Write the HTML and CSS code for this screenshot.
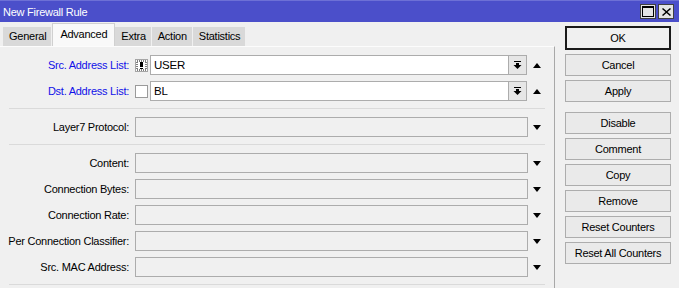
FILE: index.html
```html
<!DOCTYPE html>
<html lang="en">
<head>
    <meta charset="UTF-8">
    <title>New Firewall Rule</title>
    <link rel="stylesheet" href="styles.css">
</head>
<body>
    <div class="titlebar">
        <span class="title">New Firewall Rule</span>
        <div class="title-btns">
            <div class="tbtn">
                <svg width="12" height="11" viewBox="0 0 12 11"><rect x="0.5" y="0.5" width="11" height="10" fill="none" stroke="#000"/><rect x="0" y="0" width="12" height="2" fill="#000"/></svg>
            </div>
            <div class="tbtn">
                <svg width="9" height="8" viewBox="0 0 9 8"><path d="M1 0 L4.5 3 L8 0 L9 1 L5.5 4 L9 7 L8 8 L4.5 5 L1 8 L0 7 L3.5 4 L0 1 Z" fill="#000"/></svg>
            </div>
        </div>
    </div>

    <div class="main">
        <div class="left">
            <div class="tabs">
                <div class="tab">General</div>
                <div class="tab active">Advanced</div>
                <div class="tab">Extra</div>
                <div class="tab">Action</div>
                <div class="tab">Statistics</div>
            </div>

            <div class="panel">
                <!-- address lists -->
                <div class="group">
                    <div class="row">
                        <label class="label blue">Src. Address List:</label>
                        <div class="field">
                            <span class="check">
                                <svg width="13" height="13" viewBox="0 0 13 13"><rect x="0.5" y="0.5" width="12" height="12" fill="#fff" stroke="#555" stroke-dasharray="1 1"/><rect x="2" y="2" width="9" height="9" fill="none" stroke="#000" stroke-dasharray="1 1"/><rect x="5" y="3" width="3" height="5" fill="#000"/><rect x="5" y="9" width="3" height="1" fill="#000"/></svg>
                            </span>
                            <div class="input edit">USER</div>
                            <div class="dropbtn">
                                <svg width="9" height="9" viewBox="0 0 9 9"><rect x="1" y="0" width="7" height="1" fill="#000"/><rect x="3" y="2" width="3" height="2" fill="#000"/><polygon points="0.5,4 8.5,4 4.5,8" fill="#000"/></svg>
                            </div>
                        </div>
                        <span class="arrow up"></span>
                    </div>
                    <div class="row">
                        <label class="label blue">Dst. Address List:</label>
                        <div class="field">
                            <span class="check plain"></span>
                            <div class="input edit">BL</div>
                            <div class="dropbtn">
                                <svg width="9" height="9" viewBox="0 0 9 9"><rect x="1" y="0" width="7" height="1" fill="#000"/><rect x="3" y="2" width="3" height="2" fill="#000"/><polygon points="0.5,4 8.5,4 4.5,8" fill="#000"/></svg>
                            </div>
                        </div>
                        <span class="arrow up"></span>
                    </div>
                </div>

                <div class="group">
                    <div class="row">
                        <label class="label">Layer7 Protocol:</label>
                        <div class="field"><div class="input"></div></div>
                        <span class="arrow down"></span>
                    </div>
                </div>

                <div class="group">
                    <div class="row">
                        <label class="label">Content:</label>
                        <div class="field"><div class="input"></div></div>
                        <span class="arrow down"></span>
                    </div>
                    <div class="row">
                        <label class="label">Connection Bytes:</label>
                        <div class="field"><div class="input"></div></div>
                        <span class="arrow down"></span>
                    </div>
                    <div class="row">
                        <label class="label">Connection Rate:</label>
                        <div class="field"><div class="input"></div></div>
                        <span class="arrow down"></span>
                    </div>
                    <div class="row">
                        <label class="label">Per Connection Classifier:</label>
                        <div class="field"><div class="input"></div></div>
                        <span class="arrow down"></span>
                    </div>
                    <div class="row">
                        <label class="label">Src. MAC Address:</label>
                        <div class="field"><div class="input"></div></div>
                        <span class="arrow down"></span>
                    </div>
                </div>
            </div>
        </div>

        <div class="buttons">
            <button class="btn default">OK</button>
            <button class="btn">Cancel</button>
            <button class="btn">Apply</button>
            <button class="btn spaced">Disable</button>
            <button class="btn">Comment</button>
            <button class="btn">Copy</button>
            <button class="btn">Remove</button>
            <button class="btn">Reset Counters</button>
            <button class="btn">Reset All Counters</button>
        </div>
    </div>
</body>
</html>
```

FILE: styles.css
```css
/* General */
body {
    margin: 0;
    background: #f0f0f0;
    font-family: "Liberation Sans", Arial, sans-serif;
    font-size: 11px;
    letter-spacing: -0.25px;
    color: #000;
    height: 288px;
    overflow: hidden;
}

/* Title bar */
.titlebar {
    height: 22px;
    background: #4b4fca;
    border-top: 1px solid #6d70d6;
    box-sizing: border-box;
    display: flex;
    align-items: center;
    justify-content: space-between;
    padding: 0 5px 0 3px;
}

.title {
    color: #fff;
}

.title-btns {
    display: flex;
    gap: 2px;
}

.tbtn {
    width: 16px;
    height: 15px;
    box-sizing: border-box;
    background: #e4e4e4;
    border: 1px solid #404040;
    display: flex;
    align-items: center;
    justify-content: center;
}

/* Main layout */
.main {
    display: flex;
}

.left {
    width: 555px;
}

/* Tabs */
.tabs {
    height: 23px;
    margin-top: 1px;
    padding-left: 3px;
    display: flex;
    align-items: flex-end;
}

.tab {
    height: 19px;
    line-height: 19px;
    padding: 0 5px 0 6px;
    background: #d9d9d9;
    border-right: 1px solid #f0f0f0;
}

.tab.active {
    height: 23px;
    line-height: 21px;
    padding: 0 7px;
    background: #f9f9f9;
    border: 1px solid #d0d0d0;
    border-bottom: none;
    box-sizing: border-box;
}

/* Panel */
.panel {
    border-top: 1px solid #fcfcfc;
    border-right: 1px solid #a8a8a8;
    height: 241px;
}

.group {
    display: flex;
    flex-direction: column;
    gap: 6px;
    margin: 0 9px;
    padding: 8px 0 7px;
    border-bottom: 1px solid #dadada;
}

.row {
    height: 20px;
    display: flex;
    align-items: center;
}

.label {
    width: 120px;
    margin-right: 6px;
    display: flex;
    justify-content: flex-end;
    white-space: nowrap;
}

.label.blue {
    color: #1010e8;
}

.field {
    flex: 1;
    height: 20px;
    display: flex;
    align-items: center;
}

.input {
    flex: 1;
    height: 20px;
    box-sizing: border-box;
    border: 1px solid #acacac;
    background: #f0f0f0;
    line-height: 18px;
    padding-left: 3px;
}

.input.edit {
    background: #fff;
    font-size: 11.5px;
}

.check {
    width: 13px;
    height: 13px;
    margin-right: 2px;
    display: flex;
}

.check.plain {
    box-sizing: border-box;
    border: 1px solid #9a9a9a;
    background: #fff;
}

.dropbtn {
    width: 18px;
    height: 20px;
    box-sizing: border-box;
    border: 1px solid #acacac;
    border-left: none;
    background: #e6e6e6;
    display: flex;
    align-items: center;
    justify-content: center;
    margin-right: 1px;
}

/* Small triangles */
.arrow {
    width: 17px;
    display: flex;
    justify-content: center;
}

.arrow::before {
    content: "";
    border-left: 4.5px solid transparent;
    border-right: 4.5px solid transparent;
}

.arrow.up::before {
    border-bottom: 5px solid #000;
}

.arrow.down::before {
    border-top: 5px solid #000;
}

/* Button column */
.buttons {
    margin-left: 10px;
    margin-top: 4px;
    width: 106px;
    display: flex;
    flex-direction: column;
    gap: 4px;
}

.btn {
    height: 22px;
    background: #eaeaea;
    border: 1px solid #adadad;
    font-family: inherit;
    font-size: 11px;
    letter-spacing: -0.25px;
    color: #000;
    padding: 0;
}

.btn.default {
    height: 24px;
    border: 2px solid #1a1a1a;
    background: #f0f0f0;
}

.btn.spaced {
    margin-top: 6px;
}
```
